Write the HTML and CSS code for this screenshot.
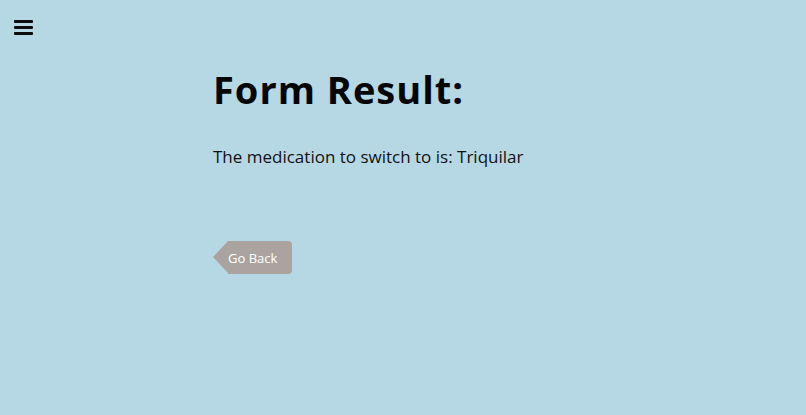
FILE: index.html
```html
<!DOCTYPE html>
<html>
<head>
<meta charset="utf-8">
<link rel="stylesheet" href="styles.css">
</head>
<body>
<header class="topbar">
  <button class="menu" aria-label="Menu">
    <span class="bar"></span><span class="bar"></span><span class="bar"></span>
  </button>
</header>
<main class="content">
  <h1 class="title">Form Result:</h1>
  <p class="result">The medication to switch to is: Triquilar</p>
  <a class="back" href="#">Go Back</a>
</main>
</body>
</html>
```
FILE: styles.css
```css
html, body {
  margin: 0;
  padding: 0;
}
body {
  background: #b6d8e4;
  font-family: "Open Sans", "DejaVu Sans", sans-serif;
  color: #111;
  width: 806px;
  height: 415px;
  overflow: hidden;
}
.topbar {
  padding: 20px 0 0 14px;
  height: 16px;
}
.menu {
  display: flex;
  flex-direction: column;
  gap: 3px;
  background: none;
  border: 0;
  padding: 0;
  cursor: pointer;
}
.bar {
  display: block;
  width: 19px;
  height: 3px;
  background: #0c0c0c;
  border-radius: 1px;
}
.content {
  padding-left: 213px;
}
.title {
  margin: 0;
  padding-top: 31px;
  font-size: 38px;
  font-weight: 700;
  line-height: 44px;
  letter-spacing: 1px;
  color: #050505;
}
.result {
  margin: 34px 0 0;
  font-size: 17px;
  line-height: 24px;
}
.back {
  display: inline-flex;
  align-items: center;
  position: relative;
  margin-top: 72px;
  margin-left: 15px;
  height: 33px;
  padding: 0 15px 0 0;
  background: #aba3a0;
  color: #fff;
  font-size: 13px;
  text-decoration: none;
  border-radius: 0 4px 4px 0;
}
.back::before {
  content: "";
  position: absolute;
  left: -15px;
  top: 0;
  border-style: solid;
  border-width: 16.5px 15px 16.5px 0;
  border-color: transparent #aba3a0 transparent transparent;
}
```
